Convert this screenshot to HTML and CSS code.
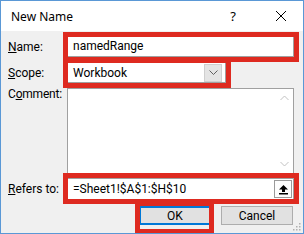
FILE: index.html
```html
<!DOCTYPE html>
<html>
<head>
    <link rel="stylesheet" href="styles.css">
</head>
<body>
    <div class="dialog">
        <div class="titlebar">
            <span class="title">New Name</span>
            <span class="help">?</span>
            <svg class="close" width="12" height="12" viewBox="0 0 12 12">
                <path d="M1 1 L11 11 M11 1 L1 11" stroke="#000" stroke-width="1" fill="none"/>
            </svg>
        </div>

        <div class="content">
            <div class="row">
                <label class="label"><u>N</u>ame:</label>
                <div class="field text">namedRange</div>
            </div>

            <div class="row">
                <label class="label"><u>S</u>cope:</label>
                <div class="field select">
                    <span class="value">Workbook</span>
                    <span class="drop">
                        <svg width="9" height="6" viewBox="0 0 9 6">
                            <path d="M0.5 0.5 L4.5 4.5 L8.5 0.5" stroke="#606060" fill="none"/>
                        </svg>
                    </span>
                </div>
            </div>

            <div class="row row-top">
                <label class="label">C<u>o</u>mment:</label>
                <div class="field area">
                    <div class="scroll">
                        <svg width="9" height="6" viewBox="0 0 9 6">
                            <path d="M0.5 5 L4.5 1 L8.5 5" stroke="#c2c2c2" fill="none"/>
                        </svg>
                        <svg width="9" height="6" viewBox="0 0 9 6">
                            <path d="M0.5 1 L4.5 5 L8.5 1" stroke="#c2c2c2" fill="none"/>
                        </svg>
                    </div>
                </div>
            </div>

            <div class="row">
                <label class="label"><u>R</u>efers to:</label>
                <div class="field text refers">
                    <span class="value">=Sheet1!$A$1:$H$10</span>
                    <span class="collapse">
                        <svg width="11" height="11" viewBox="0 0 11 11">
                            <path d="M5.5 1 L10 5.5 L7 5.5 L7 8 L4 8 L4 5.5 L1 5.5 Z" fill="#000"/>
                            <rect x="1" y="9" width="9" height="1.5" fill="#000"/>
                        </svg>
                    </span>
                </div>
            </div>

            <div class="buttons">
                <button class="btn ok">OK</button>
                <button class="btn">Cancel</button>
            </div>
        </div>

        <!-- red highlight boxes drawn over the dialog -->
        <div class="mark mark-name"></div>
        <div class="mark mark-scope"></div>
        <div class="mark mark-refers"></div>
        <div class="mark mark-ok"></div>

        <svg class="grip" width="8" height="8" viewBox="0 0 8 8">
            <rect x="6" y="0" width="1.5" height="1.5" fill="#b0b0b0"/>
            <rect x="3" y="3" width="1.5" height="1.5" fill="#b0b0b0"/>
            <rect x="6" y="3" width="1.5" height="1.5" fill="#b0b0b0"/>
            <rect x="0" y="6" width="1.5" height="1.5" fill="#b0b0b0"/>
            <rect x="3" y="6" width="1.5" height="1.5" fill="#b0b0b0"/>
            <rect x="6" y="6" width="1.5" height="1.5" fill="#b0b0b0"/>
        </svg>
    </div>
</body>
</html>
```

FILE: styles.css
```css
body {
    margin: 0;
    background: #ffffff;
    font-family: Roboto, "Noto Sans", sans-serif;
    font-size: 12px;
    color: #000;
}
.dialog {
    position: relative;
    width: 304px;
    height: 234px;
    box-sizing: border-box;
    border: 1px solid #5a98d6;
    background: #f0f0f0;
    overflow: hidden;
}
.titlebar {
    height: 30px;
    background: #ffffff;
    display: flex;
    align-items: center;
    padding-left: 10px;
}
.title {
    flex: 1;
    font-family: "Noto Sans", sans-serif;
    font-size: 12px;
}
.help {
    width: 12px;
    text-align: center;
    margin-right: 36px;
    font-family: "Noto Sans", sans-serif;
    font-size: 13px;
}
.close {
    margin-right: 16px;
}
.content {
    padding: 5px 9px 0 7px;
}
.row {
    display: flex;
    align-items: center;
    margin-bottom: 5px;
}
.row-top {
    align-items: flex-start;
    margin-bottom: 4px;
}
.label {
    width: 59px;
    flex: none;
}
.row-top .label {
    margin-top: -1px;
    letter-spacing: -0.2px;
}
.field {
    box-sizing: border-box;
    background: #ffffff;
    border: 1px solid #a0a0a0;
}
.text {
    flex: 1;
    height: 21px;
    line-height: 19px;
    padding-left: 5px;
    font-size: 12px;
}
.select {
    width: 159px;
    height: 21px;
    display: flex;
    align-items: center;
    padding-left: 5px;
    font-size: 12px;
}
.select .value {
    flex: 1;
}
.drop {
    width: 18px;
    height: 18px;
    margin-right: 3px;
    box-sizing: border-box;
    background: #e4e4e4;
    border: 1px solid #cfcfcf;
    display: flex;
    align-items: center;
    justify-content: center;
}
.area {
    flex: 1;
    height: 86px;
    display: flex;
    justify-content: flex-end;
}
.scroll {
    width: 17px;
    display: flex;
    flex-direction: column;
    justify-content: space-between;
    align-items: center;
    padding: 6px 0 6px;
}
.refers {
    height: 22px;
    display: flex;
    align-items: center;
    padding-right: 1px;
}
.refers .value {
    flex: 1;
}
.collapse {
    width: 18px;
    height: 18px;
    box-sizing: border-box;
    border: 1px solid #9a9a9a;
    background: #fdfdfd;
    display: flex;
    align-items: center;
    justify-content: center;
}
.buttons {
    display: flex;
    justify-content: flex-end;
    gap: 10px;
    margin-top: 6px;
    padding-right: 1px;
}
.btn {
    width: 72px;
    height: 19px;
    padding: 0;
    margin: 0;
    border: 1px solid #adadad;
    background: #e1e1e1;
    font-family: Roboto, "Noto Sans", sans-serif;
    font-size: 12px;
    color: #000;
}
.ok {
    border: 1px solid #0078d7;
    box-shadow: inset 0 0 0 1px #0078d7;
}
.mark {
    position: absolute;
    box-sizing: border-box;
    border: 5px solid #de2a20;
}
.mark-name {
    left: 62px;
    top: 31px;
    width: 236px;
    height: 30px;
}
.mark-scope {
    left: 62px;
    top: 57px;
    width: 168px;
    height: 30px;
}
.mark-refers {
    left: 62px;
    top: 172px;
    width: 236px;
    height: 31px;
}
.mark-ok {
    left: 134px;
    top: 200px;
    width: 79px;
    height: 33px;
}
.grip {
    position: absolute;
    right: 2px;
    bottom: 2px;
}
```
